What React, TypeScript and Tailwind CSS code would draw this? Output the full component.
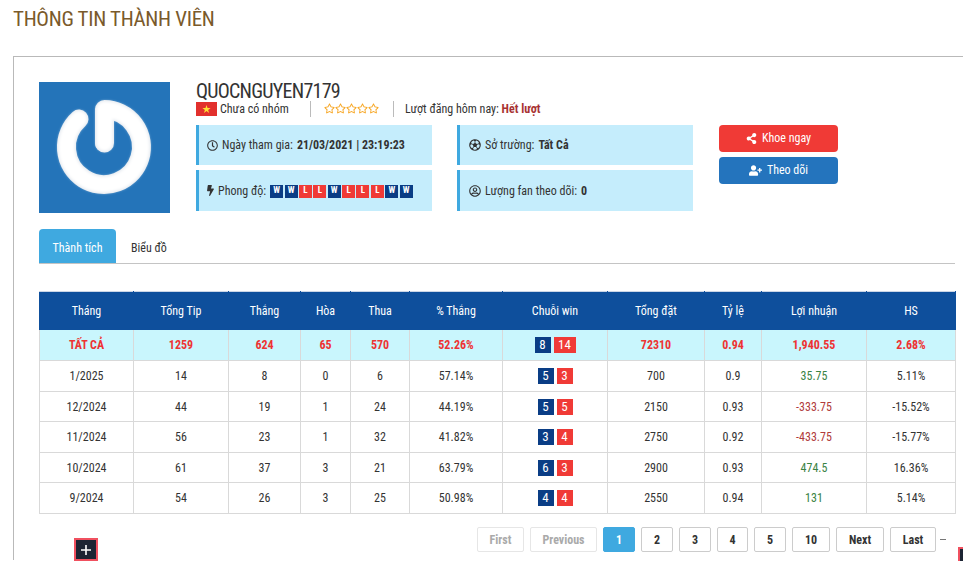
import React from "react";
import { FaRegClock, FaBolt, FaRegFutbol, FaRegUserCircle, FaShareAlt, FaUserPlus, FaRegStar } from "react-icons/fa";

const Form = ["W", "W", "L", "L", "W", "L", "L", "L", "W", "W"];
const Rows = [
  ["1/2025", "14", "8", "0", "6", "57.14%", "5", "3", "700", "0.9", "35.75", "5.11%", "h-[31px]"],
  ["12/2024", "44", "19", "1", "24", "44.19%", "5", "5", "2150", "0.93", "-333.75", "-15.52%", "h-[30px]"],
  ["11/2024", "56", "23", "1", "32", "41.82%", "3", "4", "2750", "0.92", "-433.75", "-15.77%", "h-[31px]"],
  ["10/2024", "61", "37", "3", "21", "63.79%", "6", "3", "2900", "0.93", "474.5", "16.36%", "h-[30px]"],
  ["9/2024", "54", "26", "3", "25", "50.98%", "4", "4", "2550", "0.94", "131", "5.14%", "h-[31px]"],
];
const Widths = [94, 95, 72, 50, 59, 93, 105, 97, 57, 105, 89];
const Heads = ["Tháng", "Tổng Tip", "Thắng", "Hòa", "Thua", "% Thắng", "Chuỗi win", "Tổng đặt", "Tỷ lệ", "Lợi nhuận", "HS"];
const Pages: [string, string, string][] = [
  ["First", "w-[47px]", "text-[#aaa] border-[#e6e6e6]"],
  ["Previous", "w-[67px]", "text-[#aaa] border-[#e6e6e6]"],
  ["1", "w-[32px]", "bg-[#3fa9e0] text-white border-[#3fa9e0]"],
  ["2", "w-[32px]", "text-[#333] border-[#ccc]"],
  ["3", "w-[32px]", "text-[#333] border-[#ccc]"],
  ["4", "w-[31px]", "text-[#333] border-[#ccc]"],
  ["5", "w-[32px]", "text-[#333] border-[#ccc]"],
  ["10", "w-[38px]", "text-[#333] border-[#ccc]"],
  ["Next", "w-[48px]", "text-[#333] border-[#ccc]"],
  ["Last", "w-[46px]", "text-[#333] border-[#ccc]"],
];

function Avatar() {
  return (
    <div className="w-[131px] h-[131px] shrink-0 bg-[#2474b9]">
      <svg viewBox="0 0 131 131" width="131" height="131">
        <defs>
          <filter id="soft" x="-20%" y="-20%" width="140%" height="140%">
            <feGaussianBlur stdDeviation="1.4" />
          </filter>
        </defs>
        <g fill="none" strokeLinecap="round" stroke="#e4e9ef" strokeWidth="19">
          <path d="M40 37 A37.5 37.5 0 1 0 65.5 27.5" />
          <path d="M65.5 32 V61" />
        </g>
        <path d="M56 30 Q56 23 63 23 C72 24 76 28 74 40 L74 61 A9 9 0 0 1 56 61 Z" fill="#e4e9ef" />
        <g fill="none" strokeLinecap="round" stroke="#ffffff" strokeWidth="16.5" filter="url(#soft)">
          <path d="M40 37 A37.5 37.5 0 1 0 65.5 27.5" />
          <path d="M65.5 30 V61" />
        </g>
      </svg>
    </div>
  );
}

function Flag() {
  return (
    <svg width="21" height="14" viewBox="0 0 21 14" className="shrink-0">
      <rect width="21" height="14" fill="#e2302d" />
      <polygon points="10.5,3 11.5,6 14.6,6 12.1,7.9 13.1,11 10.5,9.1 7.9,11 8.9,7.9 6.4,6 9.5,6" fill="#ffe033" />
    </svg>
  );
}

function InfoBox({ icon, children, left }: { icon: React.ReactNode; children: React.ReactNode; left: string }) {
  return (
    <div className={`bg-[#c5edfc] border-l-[3px] border-[#3fa9e0] flex items-center gap-[4px] text-[#333] ${left}`}>
      {icon}
      {children}
    </div>
  );
}

function Plus({ cls }: { cls: string }) {
  return (
    <div className={`w-[24px] h-[23px] bg-[#1c2433] border-2 border-[#f0505f] flex items-center justify-center shrink-0 ${cls}`}>
      <svg width="12" height="12" viewBox="0 0 12 12"><path d="M6 1V11M1 6H11" stroke="#fff" strokeWidth="1.6" /></svg>
    </div>
  );
}

export default function App() {
  return (
    <div className="w-[963px] h-[561px] overflow-hidden bg-white text-[12px] text-[#333] [font-family:Roboto,sans-serif] [font-stretch:condensed]">
      <h1 className="h-[56px] pl-[13px] pt-[6px] text-[21px] tracking-[-0.3px] leading-[26px] text-[#7a5a2b] font-normal">THÔNG TIN THÀNH VIÊN</h1>
      <div className="ml-[13px] h-[504px] border-l border-t border-[#b9b9b9] pl-[25px] pt-[25px] pr-[8px]">
        <div className="flex">
          <Avatar />
          <div className="ml-[26px] w-[497px]">
            <div className="text-[20px] tracking-[-0.75px] leading-[18px] text-[#333] h-[18px]">QUOCNGUYEN7179</div>
            <div className="flex items-center h-[17px]">
              <Flag />
              <span className="ml-[3px] w-[90px]">Chưa có nhóm</span>
              <span className="h-[16px] w-px bg-[#bbb]" />
              <span className="ml-[13px] w-[69px] flex text-[#f7a520] text-[11px] gap-0">
                {[0, 1, 2, 3, 4].map((i) => <FaRegStar key={i} />)}
              </span>
              <span className="h-[16px] w-px bg-[#bbb]" />
              <span className="ml-[11px]">Lượt đăng hôm nay: <b className="text-[#a83232]">Hết lượt</b></span>
            </div>
            <div className="mt-[8px] grid grid-cols-[236px_236px] grid-rows-[40px_41px] gap-x-[25px] gap-y-[5px]">
              <InfoBox left="pl-[8px]" icon={<FaRegClock className="text-[11px] shrink-0" />}>
                <span>Ngày tham gia:</span><b>21/03/2021 | 23:19:23</b>
              </InfoBox>
              <InfoBox left="pl-[9px]" icon={<FaRegFutbol className="text-[12px] shrink-0" />}>
                <span>Sở trường:</span><b>Tất Cả</b>
              </InfoBox>
              <InfoBox left="pl-[8px]" icon={<FaBolt className="text-[11px] w-[7px] shrink-0" />}>
                <span>Phong độ:</span>
                <span className="mt-[1px] flex gap-[1.4px]">
                  {Form.map((f, i) => (
                    <span key={i} className={`w-[13px] h-[13px] flex items-center justify-center text-white text-[9px] font-bold ${f === "W" ? "bg-[#0a3d85]" : "bg-[#f03a36]"}`}>{f}</span>
                  ))}
                </span>
              </InfoBox>
              <InfoBox left="pl-[9px]" icon={<FaRegUserCircle className="text-[12px] shrink-0" />}>
                <span>Lượng fan theo dõi:</span><b>0</b>
              </InfoBox>
            </div>
          </div>
          <div className="ml-[26px] w-[119px] pt-[43px] flex flex-col gap-[5px]">
            <div className="h-[27px] pb-[1px] rounded-[4px] bg-[#f03a36] text-white flex items-center justify-center gap-[5px]"><FaShareAlt className="text-[11px]" />Khoe ngay</div>
            <div className="h-[27px] pb-[1px] rounded-[4px] bg-[#2474bd] text-white flex items-center justify-center gap-[5px]"><FaUserPlus className="text-[13px]" />Theo dõi</div>
          </div>
        </div>

        <div className="mt-[16px] h-[35px] border-b border-[#c4c4c4] flex">
          <div className="w-[77px] h-[34px] pt-[3px] rounded-t-[4px] bg-[#3fa9e0] text-white flex items-center justify-center">Thành tích</div>
          <div className="ml-[15px] h-[34px] pt-[3px] flex items-center">Biểu đồ</div>
        </div>

        <table className="mt-[27px] w-[916px] table-fixed border-collapse text-center">
          <colgroup>
            {Widths.map((w, i) => <col key={i} style={{ width: w }} />)}
          </colgroup>
          <thead>
            <tr className="h-[38px] bg-[#0e4f9c] text-white">
              {Heads.map((h) => <th key={h} className="font-normal border-x border-t border-x-[#0e4f9c] border-t-[#ccd6e6]">{h}</th>)}
            </tr>
          </thead>
          <tbody>
            <tr className="h-[31px] bg-[#c9f6fd] text-[#ee3333] font-bold">
              {["TẤT CẢ", "1259", "624", "65", "570", "52.26%"].map((c, i) => <td key={i} className="border border-[#d9d9d9] border-t-0">{c}</td>)}
              <td className="border border-[#d9d9d9] border-t-0">
                <div className="flex justify-center gap-[3px] font-normal text-[13px] text-white">
                  <span className="w-[16px] h-[16px] leading-[16px] bg-[#0a3d85]">8</span>
                  <span className="w-[22px] h-[16px] leading-[16px] bg-[#f03a36]">14</span>
                </div>
              </td>
              {["72310", "0.94", "1,940.55", "2.68%"].map((c, i) => <td key={i} className="border border-[#d9d9d9] border-t-0">{c}</td>)}
            </tr>
            {Rows.map((r) => (
              <tr key={r[0]} className={r[12]}>
                {r.slice(0, 6).map((c, i) => <td key={i} className="border border-[#d9d9d9]">{c}</td>)}
                <td className="border border-[#d9d9d9]">
                  <div className="flex justify-center gap-[3px] font-normal text-[13px] text-white">
                    <span className="w-[16px] h-[16px] leading-[16px] bg-[#0a3d85]">{r[6]}</span>
                    <span className="w-[16px] h-[16px] leading-[16px] bg-[#f03a36]">{r[7]}</span>
                  </div>
                </td>
                <td className="border border-[#d9d9d9]">{r[8]}</td>
                <td className="border border-[#d9d9d9]">{r[9]}</td>
                <td className={`border border-[#d9d9d9] ${r[10].startsWith("-") ? "text-[#b03a3a]" : "text-[#3a8344]"}`}>{r[10]}</td>
                <td className="border border-[#d9d9d9]">{r[11]}</td>
              </tr>
            ))}
          </tbody>
        </table>

        <div className="relative mt-[13px] h-[34px] flex items-start">
          <Plus cls="ml-[35px] mt-[11px]" />
          <div className="ml-auto mr-[13px] flex items-center gap-[6px] font-bold">
            {Pages.map(([t, w, c]) => (
              <div key={t} className={`h-[25px] rounded-[2px] border flex items-center justify-center ${w} ${c}`}>{t}</div>
            ))}
            <span className="w-[6px] h-px bg-[#777] ml-[-2px] mr-[-4px]" />
          </div>
          <Plus cls="absolute left-[919px] top-[20px]" />
        </div>
      </div>
    </div>
  );
}
